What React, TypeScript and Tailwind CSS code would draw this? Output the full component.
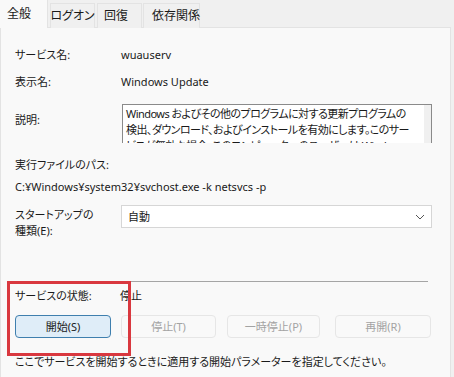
export default function App() {
  const font = "font-['Noto_Sans','Noto_Sans_CJK_JP',sans-serif] [font-feature-settings:'palt']";
  return (
    <div className={`relative w-[454px] h-[377px] overflow-hidden bg-[#f0f0f0] text-[11px] leading-[16px] text-[#1a1a1a] ${font}`}>
      {/* tabs */}
      <div className="flex h-[28px] items-end whitespace-nowrap text-[12px]">
        <div className="relative z-10 flex h-[28px] w-[48px] items-center border-r border-[#e3e3e3] bg-[#f9f9f9] pl-[7px] pb-[1px]">全般</div>
        <div className="ml-[2px] flex h-[25px] w-[45px] items-center justify-center border border-b-0 border-[#e3e3e3] bg-[#f0f0f0]">ログオン</div>
        <div className="ml-[2px] flex h-[25px] w-[45px] items-center pl-[6px] border border-b-0 border-[#e3e3e3] bg-[#f0f0f0]">回復</div>
        <div className="ml-[1px] flex h-[25px] w-[57px] items-center pl-[8px] border border-b-0 border-[#e3e3e3] bg-[#f0f0f0]">依存関係</div>
      </div>

      {/* panel */}
      <div className="-mt-px h-[360px] w-[451px] border border-[#e3e3e3] bg-[#f9f9f9] pl-[14px] pt-[19px]">
        <div className="flex h-[16px]">
          <div className="w-[106px]">サービス名:</div>
          <div>wuauserv</div>
        </div>
        <div className="mt-[11px] flex h-[16px]">
          <div className="w-[106px]">表示名:</div>
          <div>Windows Update</div>
        </div>
        <div className="mt-[14px] flex">
          <div className="w-[107px] pt-[8px]">説明:</div>
          <div className="flex h-[39px] w-[310px] overflow-hidden border border-b-0 border-[#8a8a8a] bg-white">
            <div className="flex-1 overflow-hidden whitespace-nowrap pl-[3px] pt-[1px] leading-[16px] tracking-[-0.55px]">
              <div>Windows およびその他のプログラムに対する更新プログラムの</div>
              <div>検出、ダウンロード、およびインストールを有効にします。このサー</div>
              <div>ビスが無効な場合、このコンピューターのユーザーは Windows</div>
            </div>
            <div className="w-[7px] shrink-0 bg-[#f0f0f0]" />
          </div>
        </div>
        <div className="mt-[14px] h-[16px]">実行ファイルのパス:</div>
        <div className="mt-[6px] h-[16px]">C:¥Windows¥system32¥svchost.exe -k netsvcs -p</div>
        <div className="mt-[10px] flex">
          <div className="w-[106px] pt-[2px] leading-[16px]">
            <div>スタートアップの</div>
            <div>種類(E):</div>
          </div>
          <div className="flex h-[23px] w-[311px] items-center justify-between border border-[#d6d6d6] bg-white pl-[6px] pr-[6px]">
            <span>自動</span>
            <svg width="10" height="6" viewBox="0 0 10 6" fill="none" stroke="#555" strokeWidth="1">
              <path d="M1 1l4 4 4-4" />
            </svg>
          </div>
        </div>
        <div className="mt-[42px] h-px w-[413px] bg-[#a5a5a5]" />
        <div className="mt-[6px] flex h-[16px]">
          <div className="w-[105px]">サービスの状態:</div>
          <div>停止</div>
        </div>
        <div className="mt-[11px] flex h-[23px] gap-[10px]">
          <div className="flex w-[96px] items-center justify-center rounded-[4px] border border-[#3f7fae] bg-[#dfedf8]">開始(S)</div>
          <div className="flex w-[95px] items-center justify-center rounded-[4px] border border-[#e6e6e6] bg-[#f9f9f9] text-[#a3a3a3]">停止(T)</div>
          <div className="ml-[1px] flex w-[93px] items-center justify-center rounded-[4px] border border-[#e6e6e6] bg-[#f9f9f9] text-[#a3a3a3]">一時停止(P)</div>
          <div className="ml-[5px] flex w-[96px] items-center justify-center rounded-[4px] border border-[#e6e6e6] bg-[#f9f9f9] text-[#a3a3a3]">再開(R)</div>
        </div>
        <div className="mt-[16px] h-[16px] whitespace-nowrap">ここでサービスを開始するときに適用する開始パラメーターを指定してください。</div>
      </div>

      {/* annotation */}
      <div className="absolute left-[7px] top-[281px] h-[75px] w-[124px] border-[3px] border-[#d9383f]" />
    </div>
  );
}
